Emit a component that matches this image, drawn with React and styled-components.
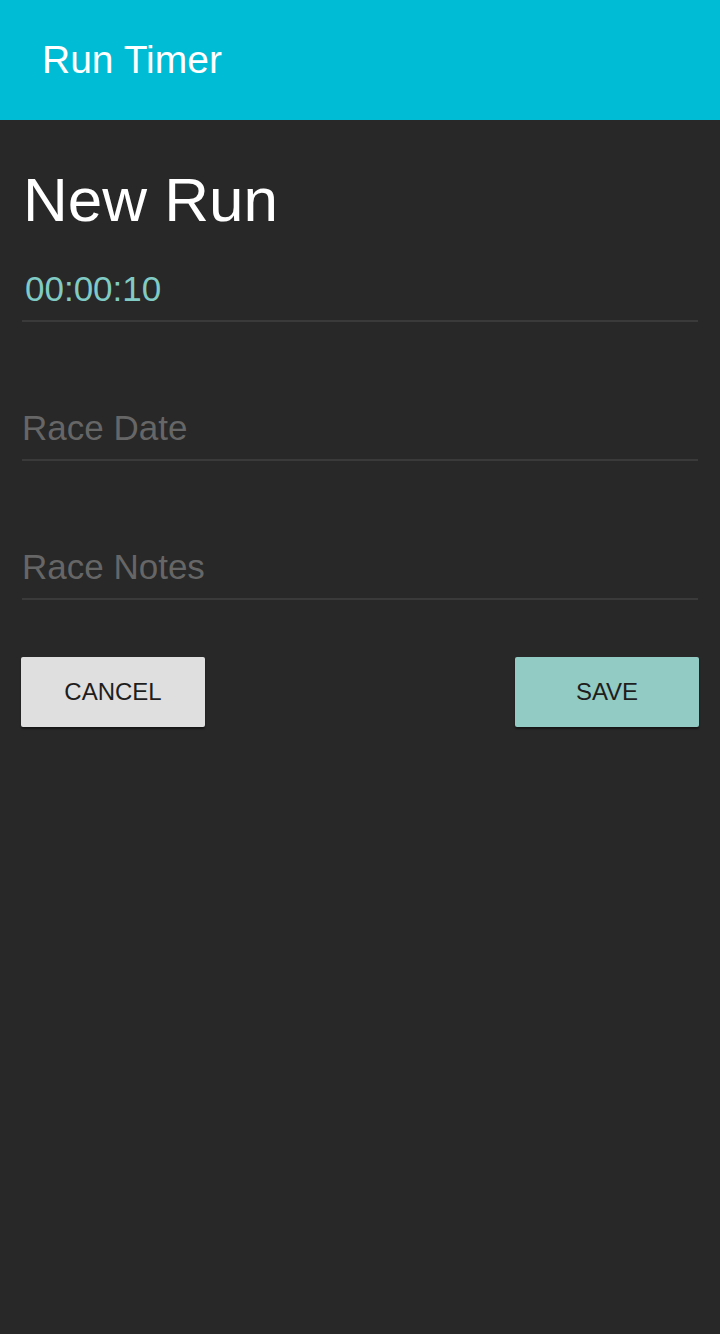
import React from 'react';
import styled, { createGlobalStyle } from 'styled-components';

const GlobalStyle = createGlobalStyle`
  html, body {
    margin: 0;
    padding: 0;
    background: #282828;
    font-family: "Liberation Sans", Arial, sans-serif;
  }
`;

const Page = styled.div`
  min-height: 1334px;
  background: #282828;
`;

const AppBar = styled.header`
  height: 120px;
  background: #00bcd4;
  display: flex;
  align-items: center;
  padding: 0 42px;
  box-sizing: border-box;
`;

const AppTitle = styled.h1`
  margin: 0;
  color: #ffffff;
  font-size: 39px;
  font-weight: 400;
  line-height: 1;
  margin-top: -2px;
`;

const Content = styled.main`
  padding: 0 22px;
`;

const Heading = styled.h2`
  margin: 0;
  padding-top: 48px;
  padding-left: 1px;
  color: #ffffff;
  font-size: 62px;
  font-weight: 400;
  line-height: 64px;
`;

const Field = styled.div`
  height: ${p => p.height}px;
  border-bottom: 2px solid #3a3a3a;
  display: flex;
  align-items: flex-end;
  padding-bottom: 14px;
  box-sizing: border-box;
`;

const FieldText = styled.span`
  font-size: ${p => p.size}px;
  color: ${p => p.color};
  padding-left: ${p => p.indent}px;
  line-height: 1;
`;

const Actions = styled.div`
  display: flex;
  justify-content: space-between;
  margin: 57px -1px 0 -1px;
`;

const Button = styled.button`
  width: 184px;
  height: 70px;
  border: none;
  border-radius: 2px;
  background: ${p => (p.primary ? '#91cbc4' : '#dfdfdf')};
  color: #1e1e1e;
  font-family: "Liberation Sans", Arial, sans-serif;
  font-size: 24px;
  text-transform: uppercase;
  box-shadow: 0 2px 2px rgba(0, 0, 0, 0.45);
  cursor: pointer;
`;

export default function App() {
  return (
    <Page>
      <GlobalStyle />
      <AppBar>
        <AppTitle>Run Timer</AppTitle>
      </AppBar>
      <Content>
        <Heading>New Run</Heading>
        <Field height={90}>
          <FieldText size={35} color="#80cbc4" indent={3}>00:00:10</FieldText>
        </Field>
        <Field height={139}>
          <FieldText size={35} color="#666666" indent={0}>Race Date</FieldText>
        </Field>
        <Field height={139}>
          <FieldText size={35} color="#666666" indent={0}>Race Notes</FieldText>
        </Field>
        <Actions>
          <Button>Cancel</Button>
          <Button primary>Save</Button>
        </Actions>
      </Content>
    </Page>
  );
}
